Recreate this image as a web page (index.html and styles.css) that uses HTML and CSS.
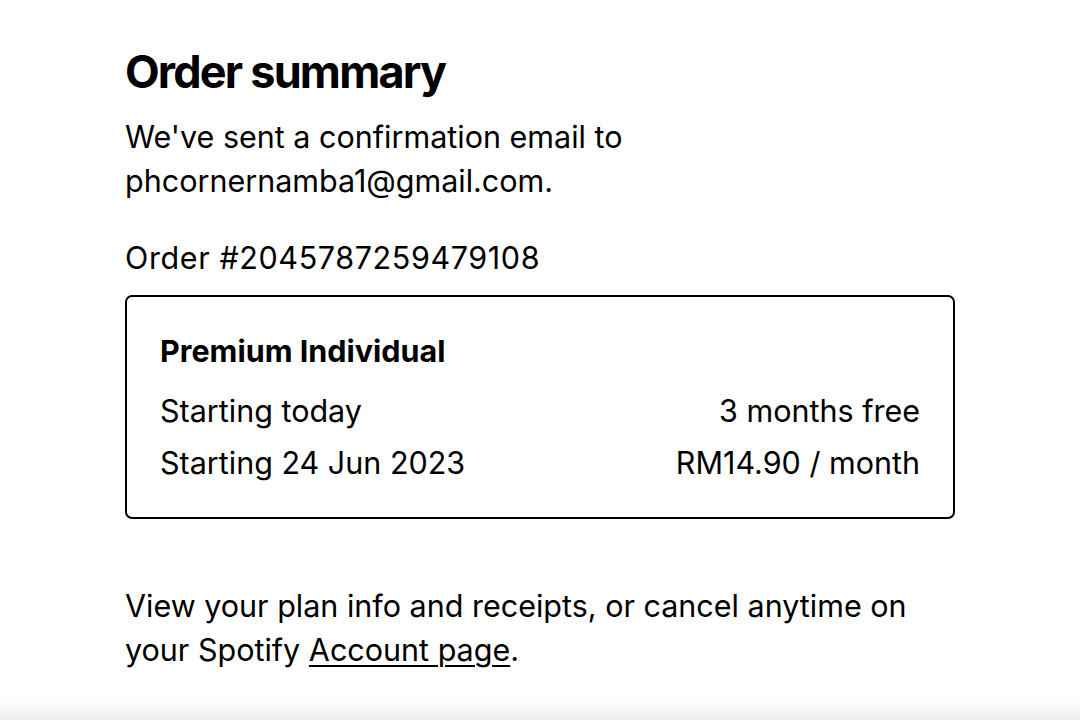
FILE: index.html
```html
<!DOCTYPE html>
<html lang="en">

<head>
    <meta charset="UTF-8">
    <meta name="viewport" content="width=device-width, initial-scale=1.0">
    <title>Order summary</title>
    <link rel="stylesheet" href="styles.css">
</head>

<body>
    <main class="summary">
        <h1 class="summary-title">Order summary</h1>
        <p class="summary-text">We've sent a confirmation email to<br>phcornernamba1@gmail.com.</p>
        <p class="summary-order">Order #2045787259479108</p>

        <div class="plan-card">
            <h2 class="plan-name">Premium Individual</h2>
            <div class="plan-row">
                <span>Starting today</span>
                <span>3 months free</span>
            </div>
            <div class="plan-row">
                <span>Starting 24 Jun 2023</span>
                <span>RM14.90 / month</span>
            </div>
        </div>

        <p class="summary-footer">View your plan info and receipts, or cancel anytime on<br>your Spotify <a href="#">Account page</a>.</p>
    </main>
    <div class="bottom-bar"></div>
</body>

</html>
```

FILE: styles.css
```css
body {
    font-family: Inter, "Liberation Sans", sans-serif;
    background-color: #ffffff;
    color: #000000;
    margin: 0;
    height: 100vh;
    overflow: hidden;
    display: flex;
    flex-direction: column;
}

.summary {
    width: 830px;
    margin: 0 auto;
    padding-top: 44px;
    flex-grow: 1;
}

.summary-title {
    font-size: 45px;
    font-weight: 700;
    letter-spacing: -1.8px;
    line-height: 56px;
    margin: 0 0 15px;
}

.summary-text,
.summary-order,
.summary-footer {
    font-size: 30.5px;
    line-height: 44px;
    margin: 0;
}

.summary-order {
    margin-top: 33px;
    letter-spacing: 0.6px;
}

.plan-card {
    margin-top: 15px;
    border: 2px solid #000000;
    border-radius: 7px;
    padding: 34px 33px 38px;
}

.plan-name {
    font-size: 30.5px;
    font-weight: 700;
    line-height: 40px;
    margin: 0 0 24px;
}

.plan-row {
    display: flex;
    justify-content: space-between;
    font-size: 30.5px;
    line-height: 32px;
}

.plan-row + .plan-row {
    margin-top: 20px;
}

.summary-footer {
    margin-top: 65px;
}

.summary-footer a {
    color: #000000;
    text-decoration: underline;
    text-decoration-thickness: 2px;
    text-underline-offset: 4px;
}

.bottom-bar {
    height: 20px;
    background: linear-gradient(to bottom, #ffffff, #eeeeee);
}
```
